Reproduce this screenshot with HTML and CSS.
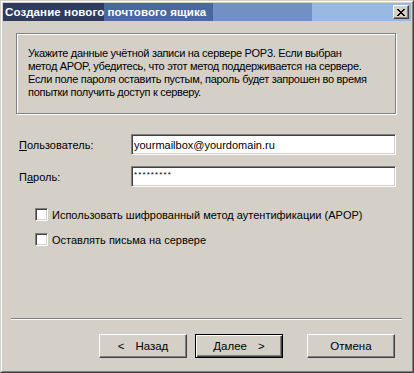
FILE: index.html
```html
<!DOCTYPE html>
<html lang="ru">
<head>
  <meta charset="UTF-8" />
  <title>Создание нового почтового ящика</title>
  <link rel="stylesheet" href="styles.css">
</head>
<body>
  <div class="window">
    <div class="frame">
      <div class="titlebar">
        <span class="title">Создание нового почтового ящика</span>
        <button class="close-button" aria-label="Закрыть">
          <svg width="8" height="7" viewBox="0 0 8 7" shape-rendering="crispEdges">
            <path d="M0 0h2v1H0zM6 0h2v1H6zM1 1h2v1H1zM5 1h2v1H5zM2 2h4v1H2zM3 3h2v1H3zM2 4h4v1H2zM1 5h2v1H1zM5 5h2v1H5zM0 6h2v1H0zM6 6h2v1H6z" fill="#000"/>
          </svg>
        </button>
      </div>

      <div class="client">
        <div class="info-box">
          <p class="info-text">
            Укажите данные учётной записи на сервере POP3. Если выбран<br>
            метод APOP, убедитесь, что этот метод поддерживается на сервере.<br>
            Если поле пароля оставить пустым, пароль будет запрошен во время<br>
            попытки получить доступ к серверу.
          </p>
        </div>

        <div class="fields">
          <div class="field-row">
            <label class="field-label"><u>П</u>ользователь:</label>
            <div class="textbox">yourmailbox@yourdomain.ru</div>
          </div>
          <div class="field-row">
            <label class="field-label">П<u>а</u>роль:</label>
            <div class="textbox password">*********</div>
          </div>
        </div>

        <div class="options">
          <label class="check-row"><span class="checkbox"></span>Использовать шифрованный метод аутентификации (APOP)</label>
          <label class="check-row"><span class="checkbox"></span>Оставлять письма на сервере</label>
        </div>

        <div class="separator"></div>

        <div class="buttons">
          <button class="button"><span class="arrow-left">&lt;</span>Назад</button>
          <button class="button default">Далее<span class="arrow-right">&gt;</span></button>
          <button class="button cancel">Отмена</button>
        </div>
      </div>
    </div>
  </div>
</body>
</html>
```

FILE: styles.css
```css
*, *::before, *::after {
  box-sizing: border-box;
}

body {
  margin: 0;
  background: #d4d0c8;
  font-family: "Liberation Sans", Arial, sans-serif;
  font-size: 11px;
  color: #000;
}

.window {
  width: 414px;
  height: 373px;
  border: 1px solid;
  border-color: #d4d0c8 #404040 #404040 #d4d0c8;
  background: #d4d0c8;
}

.frame {
  height: 100%;
  border: 1px solid;
  border-color: #fff #808080 #808080 #fff;
  padding: 1px;
  display: flex;
  flex-direction: column;
}

.titlebar {
  height: 18px;
  flex-shrink: 0;
  display: flex;
  align-items: center;
  justify-content: space-between;
  padding-left: 2px;
  padding-right: 2px;
  background: linear-gradient(to right,
    #2f3b5c 0, #2f3b5c 101px,
    #4a679e 101px, #4a679e 210px,
    #7191c5 210px, #7191c5 309px,
    #98b9e1 309px);
}

.title {
  color: #fff;
  font-weight: bold;
  font-size: 11.5px;
  letter-spacing: 0.1px;
  white-space: nowrap;
}

.close-button {
  width: 16px;
  height: 14px;
  padding: 0;
  margin: 0;
  display: flex;
  align-items: center;
  justify-content: center;
  background: #d4d0c8;
  border: 1px solid;
  border-color: #fff #404040 #404040 #fff;
  box-shadow: inset -1px -1px #808080;
}

.client {
  flex: 1;
  display: flex;
  flex-direction: column;
}

.info-box {
  margin: 12px 15px 0 13px;
  height: 81px;
  border: 1px solid #808080;
  box-shadow: inset 1px 1px #fff, 1px 1px #fff;
  padding: 13px 10px 0 11px;
}

.info-text {
  margin: 0;
  line-height: 13px;
  letter-spacing: -0.3px;
  white-space: nowrap;
}

.fields {
  margin-top: 20px;
  display: flex;
  flex-direction: column;
  gap: 11px;
}

.field-row {
  display: flex;
  align-items: center;
  padding-left: 16px;
}

.field-label {
  width: 112px;
}

.textbox {
  width: 265px;
  height: 21px;
  background: #fff;
  border: 1px solid;
  border-color: #808080 #fff #fff #808080;
  box-shadow: inset 1px 1px #404040, inset -1px -1px #d4d0c8;
  padding: 0 2px;
  display: flex;
  align-items: center;
}

.textbox.password {
  font-size: 8px;
  align-items: flex-start;
  padding-top: 3px;
  letter-spacing: 1.1px;
}

.options {
  margin-top: 21px;
  padding-left: 32px;
  display: flex;
  flex-direction: column;
  gap: 12px;
}

.check-row {
  display: flex;
  align-items: center;
  height: 13px;
  gap: 4px;
}

.checkbox {
  width: 13px;
  height: 13px;
  flex-shrink: 0;
  background: #fff;
  border: 1px solid;
  border-color: #808080 #fff #fff #808080;
  box-shadow: inset 1px 1px #404040, inset -1px -1px #d4d0c8;
}

.separator {
  margin: 72px 9px 0 8px;
  height: 2px;
  border-top: 1px solid #808080;
  border-bottom: 1px solid #fff;
}

.buttons {
  margin-top: 14px;
  padding-left: 96px;
  display: flex;
  gap: 8px;
}

.button {
  width: 88px;
  height: 24px;
  padding: 0;
  background: #d4d0c8;
  font-family: inherit;
  font-size: 11.5px;
  color: #000;
  border: 1px solid;
  border-color: #fff #404040 #404040 #fff;
  box-shadow: inset -1px -1px #808080;
}

.button.default {
  border: 1px solid #000;
  box-shadow: inset 1px 1px #fff, inset -1px -1px #404040, inset -2px -2px #808080;
}

.button.cancel {
  margin-left: 16px;
}

.arrow-left {
  margin-right: 11px;
}

.arrow-right {
  margin-left: 11px;
}
```
